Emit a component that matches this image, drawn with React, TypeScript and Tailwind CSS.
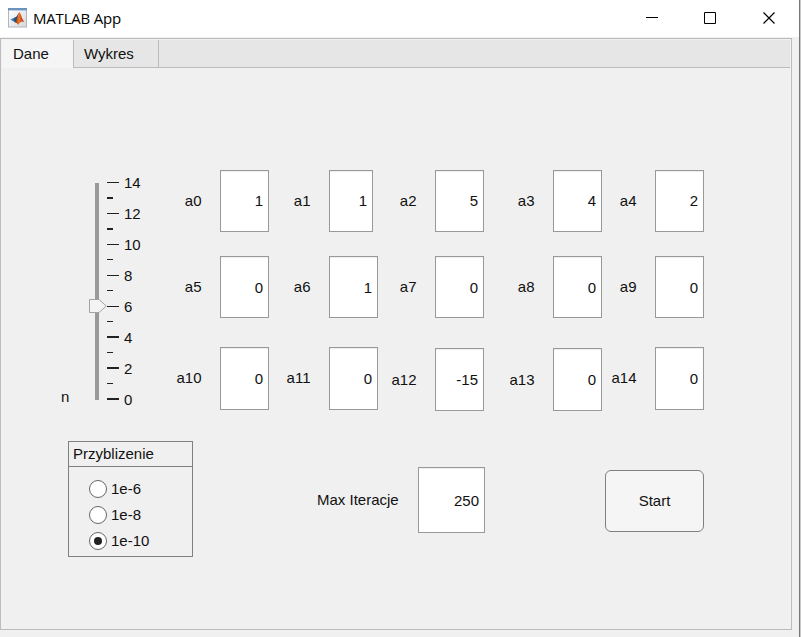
const COLUMNS = 'grid grid-cols-[99px_109px_106px_118px_102px]';

type FieldProps = {
  name: string;
  value: string;
  cell?: string;
  label?: string;
  box?: string;
};

const ROWS: { className: string; fields: FieldProps[] }[] = [
  {
    className: 'h-[86px]',
    fields: [
      { name: 'a0', value: '1' },
      { name: 'a1', value: '1', box: 'w-[44px] h-[62px]' },
      { name: 'a2', value: '5' },
      { name: 'a3', value: '4' },
      { name: 'a4', value: '2' },
    ],
  },
  {
    className: 'h-[91px]',
    fields: [
      { name: 'a5', value: '0', box: 'w-[49px] h-[62px] pt-px' },
      { name: 'a6', value: '1', box: 'w-[49px] h-[62px] pt-px' },
      { name: 'a7', value: '0', box: 'w-[49px] h-[62px] pt-px' },
      { name: 'a8', value: '0', box: 'w-[49px] h-[62px] pt-px' },
      { name: 'a9', value: '0', box: 'w-[49px] h-[62px] pt-px' },
    ],
  },
  {
    className: 'h-[64px]',
    fields: [
      { name: 'a10', value: '0', box: 'w-[49px] h-[63px] pt-px' },
      { name: 'a11', value: '0', box: 'w-[49px] h-[63px] pt-px' },
      { name: 'a12', value: '-15', cell: 'pt-px', label: 'pt-[23px]', box: 'w-[49px] h-[63px] pt-px' },
      { name: 'a13', value: '0', cell: 'pt-px', label: 'pt-[23px]', box: 'w-[49px] h-[63px] pt-px' },
      { name: 'a14', value: '0', box: 'w-[49px] h-[63px] pt-px' },
    ],
  },
];

function Field({ name, value, cell = '', label = 'pt-[22px]', box = 'w-[49px] h-[62px]' }: FieldProps) {
  return (
    <label className={`flex ${cell}`}>
      <span className={`flex-1 pr-[18.5px] text-right ${label}`}>{name}</span>
      <span className="w-[49px] shrink-0">
        <span
          className={`flex justify-end border border-[#999] bg-white pr-[5px] shadow-[inset_0_1px_1px_#eee] ${box}`}
        >
          <span className="pt-[21px]">{value}</span>
        </span>
      </span>
    </label>
  );
}

const TICKS = [
  [182, 1], [197, 2], [213, 1], [228, 2], [244, 1], [259, 1], [275, 1], [290, 1],
  [306, 1], [321, 1], [336, 2], [352, 1], [367, 2], [383, 1], [398, 2],
];

function Slider() {
  return (
    <div className="flex h-[241px]">
      <span className="w-[28px] pt-[218px]">n</span>
      <div className="relative w-[18px] pt-[13px]">
        <div className="ml-[6px] h-[217px] w-[4px] bg-[#999]" />
        <svg className="absolute left-0 top-[128px]" width="19" height="16" viewBox="0 0 19 16">
          <path d="M0.5 1.5H10L17.3 8L10 14.5H0.5Z" fill="#f3f3f3" stroke="#a3a3a3" />
        </svg>
      </div>
      <div className="w-[17px] pt-[12px]">
        {TICKS.map(([y, h], i) => (
          <div
            key={y}
            className={i % 2 ? 'w-[6px] bg-[#222]' : 'w-[12px] bg-[#222]'}
            style={{ height: h, marginTop: i ? y - TICKS[i - 1][0] - TICKS[i - 1][1] : 0 }}
          />
        ))}
      </div>
      <div className="pt-[4px]">
        {[14, 12, 10, 8, 6, 4, 2, 0].map((n) => (
          <div key={n} className="h-[31px]">{n}</div>
        ))}
      </div>
    </div>
  );
}

function Radio({ text, checked }: { text: string; checked?: boolean }) {
  return (
    <div className="flex h-[26px] items-center">
      <span className="mr-1 flex size-[18px] items-center justify-center rounded-full border border-[#666] bg-white">
        {checked && <span className="size-2 rounded-full bg-[#222]" />}
      </span>
      {text}
    </div>
  );
}

function MatlabIcon() {
  return (
    <svg width="19" height="20" viewBox="0 0 19 20">
      <defs>
        <linearGradient id="flame" x1="0" x2="1">
          <stop offset="0" stopColor="#7c1f18" />
          <stop offset="0.4" stopColor="#ee7a25" />
          <stop offset="0.65" stopColor="#d9531e" />
          <stop offset="1" stopColor="#a92a12" />
        </linearGradient>
        <linearGradient id="page" x1="0" x2="1" y1="0" y2="1">
          <stop offset="0" stopColor="#fff" />
          <stop offset="1" stopColor="#d5d8dc" />
        </linearGradient>
      </defs>
      <rect x="0.5" y="0.5" width="18" height="18.5" fill="url(#page)" stroke="#aeb6c0" />
      <rect x="0" y="0" width="19" height="2.4" fill="#6b93bd" />
      <path d="M2.4 11.6L6.6 9.6L9.4 11.7L7 14.4Z" fill="#3c78ae" />
      <path d="M6.6 9.6C9.3 8.8 9.4 6.2 11.4 4.4L10.6 10.4L8 14L6 12.8Z" fill="#274b78" />
      <path d="M11.4 4.2C13.1 6 14 11 16.4 14.2C13.8 12.6 12.2 13.8 10.2 17C9.4 15.2 8.4 14.4 7 14.4C9.2 12.4 9.4 6.6 11.4 4.2Z" fill="url(#flame)" />
    </svg>
  );
}

export default function App() {
  return (
    <div className="flex h-[637px] w-[801px] overflow-hidden bg-[#f0f0f0] font-['Liberation_Sans',Arial,sans-serif] text-[15px] leading-[18px] text-[#111]">
      <div className="flex w-[799px] flex-col">
        <header className="flex h-[37px] items-center bg-white text-black">
          <div className="mb-px ml-2"><MatlabIcon /></div>
          <h1 className="mb-[2px] ml-[6px] flex-1 whitespace-nowrap font-['Open_Sans','Noto_Sans',sans-serif] text-[15px] tracking-[-0.2px]">MATLAB App</h1>
          <svg className="mr-[23px]" width="130" height="16" viewBox="0 0 130 16" fill="none" stroke="#000">
            <path d="M0 6.5H12" />
            <path d="M58.5 1.5H69.5V12.5H58.5Z" />
            <path d="M117.5 1.5L128.5 12.5M128.5 1.5L117.5 12.5" strokeWidth="1.2" />
          </svg>
        </header>

        <main className="mt-px flex h-[592px] w-[792px] flex-col border border-[#bcbcbc]">
          <nav className="ml-px mr-px mt-px flex h-[28px] bg-[#e6e6e6]">
            <div className="w-[71px] bg-[#f5f5f5] pl-[11px] pt-[5px]">Dane</div>
            <div className="w-[86px] border-x border-b border-[#bcbcbc] pl-[10px] pt-[5px]">Wykres</div>
            <div className="flex-1 border-b border-[#bcbcbc]" />
          </nav>

          <section className="flex pl-[60px] pt-[102px]">
            <div className="w-[109px]"><Slider /></div>
            <div>
              {ROWS.map((row) => (
                <div key={row.fields[0].name} className={`${COLUMNS} ${row.className}`}>
                  {row.fields.map((f) => <Field key={f.name} {...f} />)}
                </div>
              ))}
            </div>
          </section>

          <section className="flex items-start pl-[67px] pt-[30px]">
            <fieldset className="h-[116px] w-[125px] border border-[#808080]">
              <div className="h-[25px] border-b border-[#808080] pl-1 pt-[3px]">Przyblizenie</div>
              <div className="pl-5 pt-[9px]">
                <Radio text="1e-6" />
                <Radio text="1e-8" />
                <Radio text="1e-10" checked />
              </div>
            </fieldset>
            <label className="ml-[124px] mt-[26px] flex">
              <span className="w-[101px] whitespace-nowrap pt-[24px]">Max Iteracje</span>
              <span className="flex h-[66px] w-[67px] justify-end border border-[#999] bg-white pr-[5px] pt-[24px] shadow-[inset_0_1px_1px_#eee]">250</span>
            </label>
            <button className="ml-[120px] mt-[29px] h-[62px] w-[99px] rounded-[6px] border border-[#808080] bg-[#f5f5f5]">Start</button>
          </section>
        </main>
      </div>
      <div className="w-px bg-[#777]" />
      <div className="w-px bg-[#c8c8c8]" />
    </div>
  );
}
